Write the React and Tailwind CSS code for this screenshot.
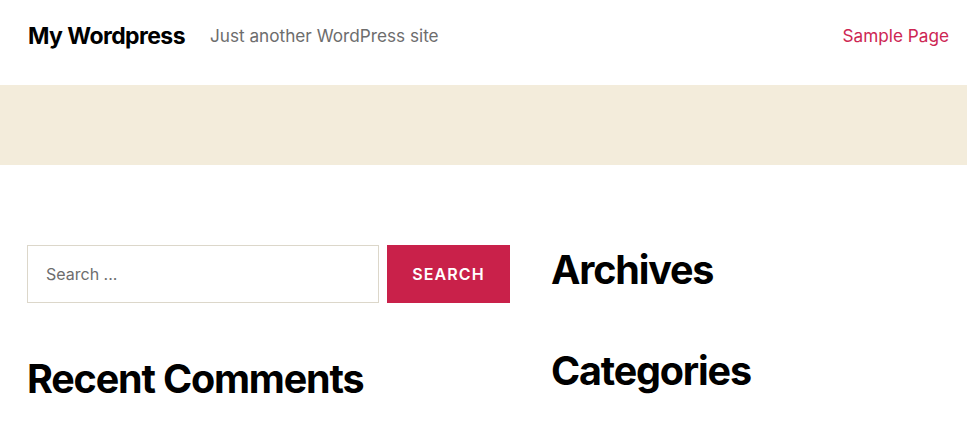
export default function App() {
  return (
    <div className="min-h-screen bg-white font-['Inter',sans-serif] text-black">
      <header className="flex h-[85px] items-center justify-between pb-[13px] pl-[28px] pr-[18px]">
        <div className="flex items-center gap-[25px]">
          <a className="text-[23px] font-bold tracking-[-0.025em]" href="#">My Wordpress</a>
          <span className="text-[17.2px] text-[#6d6d6d]">Just another WordPress site</span>
        </div>
        <a className="text-[17.2px] text-[#cd2653]" href="#">Sample Page</a>
      </header>

      <div className="h-[80px] bg-[#f3ecdb]"></div>

      <main className="grid grid-cols-[483px_1fr] gap-[41px] pl-[27px] pt-[80px]">
        <div className="flex flex-col">
          <form className="flex gap-[8px]">
            <input
              className="h-[58px] w-[352px] border border-[#dcd7ca] px-[18px] text-[16px] placeholder:text-[#6d6d6d] focus:outline-none"
              placeholder="Search ..."
              type="search"
            />
            <button className="h-[58px] flex-1 bg-[#c9214a] text-[16px] font-semibold uppercase tracking-[0.07em] text-white" type="button">
              Search
            </button>
          </form>
          <h2 className="mt-[52px] text-[39.5px] font-bold leading-[1.25] tracking-[-0.03em]">Recent Comments</h2>
        </div>
        <div className="flex flex-col">
          <h2 className="pt-[1px] text-[39.5px] font-bold leading-[1.25] tracking-[-0.03em]">Archives</h2>
          <h2 className="mt-[52px] text-[39.5px] font-bold leading-[1.25] tracking-[-0.03em]">Categories</h2>
        </div>
      </main>
    </div>
  );
}
